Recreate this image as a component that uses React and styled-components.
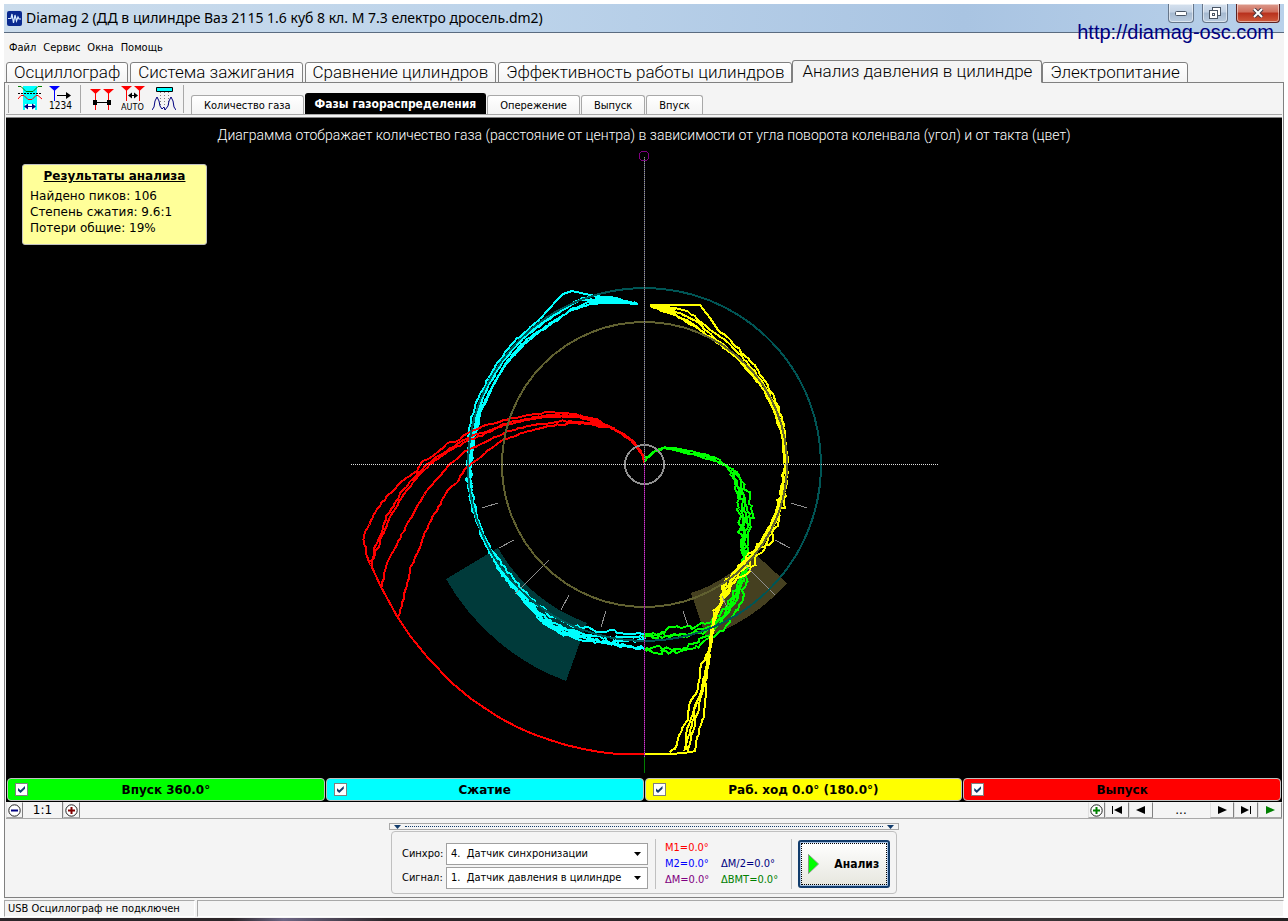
import { useState } from "react";
import styled, { createGlobalStyle } from "styled-components";

const tahoma = `"DejaVu Sans Condensed", "DejaVu Sans", sans-serif`;
const verdana = `"DejaVu Sans", sans-serif`;
const arial = `"Liberation Sans", sans-serif`;
const roboto = `Roboto, "Liberation Sans", sans-serif`;

const GlobalStyle = createGlobalStyle`
  * {
    box-sizing: border-box;
  }

  body {
    margin: 0;
    background: #fff;
    color: #000;
    font-family: ${tahoma};
    font-size: 11px;
  }

  button, select {
    font: inherit;
    color: inherit;
  }
`

const Page = styled.div`
  position: relative;
  display: flex;
  flex-direction: column;
  min-height: 100vh;
  padding-top: 4px;
`

const Window = styled.div`
  display: flex;
  flex-direction: column;
  flex: 1;
  margin: 0 4px;
  background: #f4f4f4;
`

const TitleBar = styled.header`
  display: flex;
  align-items: center;
  height: 29px;
  padding: 0 4px 0 3px;
  border-bottom: 1px solid #5a6b80;
  background: linear-gradient(90deg, #cbdcec 0%, #bcd3ea 40%, #a9c4e2 75%, #b9d1ea 100%);
`

const AppTitle = styled.h1`
  flex: 1;
  margin: 0 0 0 4px;
  font-family: "Noto Sans", sans-serif;
  font-size: 14px;
  font-weight: normal;
  line-height: 28px;
  white-space: nowrap;
`

const WindowButtons = styled.div`
  display: flex;
  gap: 8px;
  align-self: flex-start;
`

const WindowButton = styled.button`
  display: flex;
  align-items: center;
  justify-content: center;
  width: ${(props) => (props.$close ? "44px" : "26px")};
  height: 19px;
  padding: 0;
  border: 1px solid ${(props) => (props.$close ? "#5b2222" : "#66768a")};
  border-top: none;
  border-radius: 0 0 4px 4px;
  box-shadow: inset 0 0 0 1px rgba(255, 255, 255, 0.5);
  background: ${(props) => props.$close
    ? "linear-gradient(#dc9a8c 0%, #cf6d5b 45%, #b8301c 50%, #cf5a3c 100%)"
    : "linear-gradient(#d5e1ee 0%, #c3d2e4 45%, #a5b9d0 50%, #bccde0 100%)"};
`

const SiteLink = styled.a`
  position: absolute;
  top: 20px;
  right: 14px;
  color: #000080;
  font-family: ${arial};
  font-size: 20px;
  line-height: 24px;
  text-decoration: none;
`

const Menu = styled.nav`
  display: flex;
  align-items: center;
  gap: 7px;
  height: 27px;
  padding: 1px 5px 0;
`

const MenuItem = styled.button`
  padding: 0;
  border: none;
  background: none;
`

const MainTabs = styled.div`
  display: flex;
  align-items: flex-end;
  gap: 2px;
  height: 23px;
  margin-bottom: -1px;
  padding-left: 2px;
`

const MainTab = styled.button`
  position: relative;
  height: ${(props) => (props.$active ? "23px" : "21px")};
  margin: ${(props) => (props.$active ? "0 -2px" : "0")};
  padding: 0 ${(props) => (props.$active ? "9px" : "7px")};
  border: 1px solid #808080;
  border-bottom-color: ${(props) => (props.$active ? "#f4f4f4" : "#808080")};
  border-radius: 3px 3px 0 0;
  background: ${(props) => (props.$active ? "#f4f4f4" : "linear-gradient(#fff, #f4f4f4)")};
  font-family: ${roboto};
  font-size: 17px;
  font-weight: 300;
  line-height: 19px;
  white-space: nowrap;
`

const TabPanel = styled.main`
  display: flex;
  flex-direction: column;
  flex: 1;
  border: 1px solid #808080;
  padding: 0 1px;
`

const Toolbar = styled.div`
  display: flex;
  align-items: flex-start;
  height: 32px;
  padding-left: 2px;
  border-bottom: 1px solid #a8a8a8;
`

const ToolSeparator = styled.span`
  width: 1px;
  height: 28px;
  margin-top: 2px;
  background: #a8a8a8;
`

const ToolGroup = styled.div`
  display: flex;
  gap: 7px;
  padding: 3px 7px 0 9px;
`

const ToolButton = styled.button`
  display: block;
  width: 24px;
  height: 26px;
  padding: 0;
  border: none;
  background: none;
`

const SubTabs = styled.div`
  display: flex;
  align-self: flex-end;
  align-items: flex-end;
  gap: 1px;
  margin-left: 7px;
`

const SubTab = styled.button`
  height: ${(props) => (props.$active ? "21px" : "19px")};
  padding: 0 ${(props) => (props.$active ? "9px" : "12px")};
  border: 1px solid ${(props) => (props.$active ? "#000" : "#a8a8a8")};
  border-bottom: none;
  border-radius: 3px 3px 0 0;
  background: ${(props) => (props.$active ? "#000" : "linear-gradient(#fff, #f4f4f4)")};
  color: ${(props) => (props.$active ? "#fff" : "#000")};
  font-size: ${(props) => (props.$active ? "12px" : "11px")};
  font-weight: ${(props) => (props.$active ? "bold" : "normal")};
  white-space: nowrap;
`

const Canvas = styled.section`
  position: relative;
  flex: 1;
  display: flex;
  flex-direction: column;
  align-items: center;
  margin-top: 2px;
  border-top: 1px solid #808080;
  background: #000;
`

const CanvasTitle = styled.h2`
  margin: 0;
  padding-top: 8px;
  color: #fff;
  font-family: ${roboto};
  font-size: 14px;
  font-weight: 300;
  line-height: 18px;
`

const Diagram = styled.svg`
  display: block;
  margin-top: 4px;
`

const Results = styled.aside`
  position: absolute;
  top: 46px;
  left: 16px;
  width: 185px;
  height: 81px;
  padding: 3px 7px;
  border: 1px solid #c0c0c0;
  border-radius: 3px;
  background: #ffff99;
  font-family: ${verdana};
  font-size: 12px;
  line-height: 16px;

  h3 {
    margin: 0 0 4px;
    font-size: 12px;
    text-align: center;
    text-decoration: underline;
  }

  p {
    margin: 0;
  }
`

const Strokes = styled.div`
  display: grid;
  grid-template-columns: repeat(4, 1fr);
  gap: 1px;
  padding: 0 1px 1px;
  background: #000;
`

const Stroke = styled.label`
  display: flex;
  align-items: center;
  height: 23px;
  padding: 0 8px 0 7px;
  border: 1px solid #c0c0c0;
  border-radius: 4px;
  background: ${(props) => props.$color};
  font-family: ${verdana};
  font-size: 12px;
  font-weight: bold;

  span {
    flex: 1;
    padding-right: 12px;
    text-align: center;
  }
`

const CheckBox = styled.input`
  appearance: none;
  width: 13px;
  height: 13px;
  margin: 0;
  border: 1px solid #808080;
  background: #fff;

  &:checked::before {
    content: "";
    display: block;
    width: 7px;
    height: 7px;
    margin: 2px;
    background: #123c6c;
    clip-path: polygon(0 30%, 36% 62%, 100% 0, 100% 38%, 36% 100%, 0 68%);
  }
`

const ScaleBar = styled.div`
  display: flex;
  justify-content: space-between;
  height: 17px;
  border-bottom: 1px solid #a8a8a8;
`

const ScaleGroup = styled.div`
  display: flex;
`

const SmallButton = styled.button`
  display: flex;
  align-items: center;
  justify-content: center;
  width: ${(props) => (props.$round ? "17px" : "24px")};
  height: 16px;
  padding: 0;
  border: 1px solid;
  border-color: #f4f4f4 #808080 #a8a8a8 #e0e0e0;
  background: #f4f4f4;
`

const ScaleValue = styled.span`
  width: ${(props) => (props.$wide ? "57px" : "40px")};
  border-right: 1px solid ${(props) => (props.$wide ? "#f4f4f4" : "#808080")};
  font-family: ${verdana};
  font-size: 12px;
  line-height: 16px;
  text-align: center;
`

const Controls = styled.section`
  display: flex;
  flex-direction: column;
  align-items: center;
  padding: 4px 0 3px;
`

const Splitter = styled.div`
  display: flex;
  align-items: center;
  gap: 4px;
  width: 510px;
  height: 7px;
  padding: 0 4px;
  border: 1px solid #a8a8a8;

  i {
    flex: 1;
    border-top: 1px dotted #123c6c;
  }
`

const GroupBox = styled.form`
  display: flex;
  align-items: center;
  width: 506px;
  height: 63px;
  margin-top: 1px;
  padding: 2px 6px 0 10px;
  border: 1px solid #c0c0c0;
  border-radius: 4px;
`

const Fields = styled.div`
  display: grid;
  grid-template-columns: 44px 202px;
  row-gap: 2px;
  align-items: center;
  margin-top: 4px;
`

const SelectBox = styled.div`
  position: relative;

  svg {
    position: absolute;
    top: 9px;
    right: 7px;
    pointer-events: none;
  }
`

const Select = styled.select`
  appearance: none;
  display: block;
  width: 100%;
  height: 22px;
  padding: 0 4px;
  border: 1px solid #a0a0a0;
  border-radius: 0;
  background: #fff;
`

const Marks = styled.div`
  display: grid;
  grid-template-columns: 56px 1fr;
  align-content: center;
  width: 138px;
  height: 50px;
  margin: 0 6px 0 7px;
  padding-left: 9px;
  border: 1px solid #c0c0c0;
  border-width: 0 1px;
  line-height: 16px;
`

const Mark = styled.span`
  grid-column: ${(props) => props.$col};
  color: ${(props) => props.$color};
`

const AnalyzeButton = styled.button`
  display: flex;
  align-items: center;
  gap: 15px;
  width: 92px;
  height: 48px;
  padding: 0 8px;
  border: 2px solid #123c6c;
  border-radius: 3px;
  outline: 1px dotted #000;
  outline-offset: -4px;
  box-shadow: inset 0 0 0 1px #a8c4e6;
  background: linear-gradient(#fff, #e6e6de);
  font-size: 12px;
  font-weight: bold;
`

const StatusBar = styled.footer`
  display: flex;
  gap: 2px;
  padding: 2px 0 1px;
`

const StatusCell = styled.div`
  width: ${(props) => (props.$fill ? "auto" : "191px")};
  flex: ${(props) => (props.$fill ? "1" : "none")};
  height: 17px;
  padding: 0 3px;
  border: 1px solid;
  border-color: #a8a8a8 #fff #fff #a8a8a8;
  line-height: 15px;
`

const Desktop = styled.div`
  height: 4px;
  background: linear-gradient(90deg, #2c2629 0 18%, #6d6684 22%, #2c2629 30% 60%, #3a3537 80%, #232021);
`

const mainTabs = [
  "Осциллограф",
  "Система зажигания",
  "Сравнение цилиндров",
  "Эффективность работы цилиндров",
  "Анализ давления в цилиндре",
  "Электропитание",
]

const subTabs = ["Количество газа", "Фазы газораспределения", "Опережение", "Выпуск", "Впуск"];

const strokes = [
  { name: "Впуск 360.0°", color: "#00ff00" },
  { name: "Сжатие", color: "#00ffff" },
  { name: "Раб. ход 0.0° (180.0°)", color: "#ffff00" },
  { name: "Выпуск", color: "#ff0000" },
]

const marks = [
  { text: "М1=0.0°", color: "#ff0000", col: 1 },
  { text: "М2=0.0°", color: "#0000ff", col: 1 },
  { text: "ΔМ/2=0.0°", color: "#000080", col: 2 },
  { text: "ΔМ=0.0°", color: "#800080", col: 1 },
  { text: "ΔВМТ=0.0°", color: "#008000", col: 2 },
]

// every trace: noise amplitude and key points, centre of the diagram is 644,464
const redStart = "644,463 644,458 638,448 633,442 623,434 610,427";
const redTraces = [
  [1, `${redStart} 597,420 583,416 567,413 550,412 530,415 508,419 490,424 470,432 457,441 448,443 438,453 423,462 417,471 400,483 387,497 378,508 365,532 363,540 367,555 371,565`],
  [1, `${redStart} 597,421 580,416 550,415 530,418 510,422 490,430 470,437 450,448 430,462 415,476 403,490 387,516 382,532 375,547 371,565`],
  [1, `${redStart} 595,421 575,417 550,417 528,420 508,424 490,432 470,440 450,450 432,463 418,476 406,491 393,512 383,533 379,545 371,562`],
  [1, `${redStart} 593,423 563,421 527,426 503,433 483,443 465,452 450,464 438,478 427,491 415,510 400,538 388,562 381,587`],
  [1, `${redStart} 603,427 583,423 557,425 527,431 500,442 475,461 465,470 456,483 448,491 433,517 422,540 417,553 410,568 407,587 402,603 398,618`],
  [0, "371,565 381,587 398,618 411,637 428,658 452,683 470,698 483,707 500,718 517,727 533,734 550,740 566,745 583,749 600,752 617,754 645,754"],
]

const cyanTraces = [
  [0, "638,304 617,299 590,295 572,291 563,294 557,300 549,309 540,319"],
  [1, "540,319 530,328 517,339 505,352 494,368 485,385 475,405 470,425 468,440"],
  [1, "638,304 612,298 590,296 575,301 560,310 545,321 530,332 512,350 498,368 486,390 477,412 472,440"],
  [1, "638,304 600,303 585,305 570,311 550,325 534,334 518,348 503,367 489,392 479,415 473,442"],
  [1, "638,304 604,301 588,302 572,309 553,322 538,333 522,346 506,364 492,388 481,412 474,440"],
  [1, "638,304 606,300 580,300 566,308 548,320 536,328 520,342 504,360 490,383 480,405 472,440"],
  [2, "468,440 467,465 468,490 475,514 485,540 500,562 520,588 540,606 554,618 570,625 590,629 600,631 610,631 628,633 644,635"],
  [2, "472,440 469,466 471,490 476,516 487,545 500,568 518,590 537,612 552,624 572,632 590,634 605,638 625,636 644,638"],
  [2, "473,442 470,465 470,492 475,512 483,538 496,565 512,587 530,606 545,622 560,632 580,637 600,641 620,646 644,649"],
  [2, "474,440 471,470 470,495 477,520 488,548 502,574 520,595 534,613 550,627 568,635 590,638 610,642 628,641 644,640"],
  [2, "472,440 468,460 467,480 470,500 478,525 487,545 498,566 512,587 530,608 545,624 560,633 580,640 600,643 622,645 644,648"],
  [2, "484,540 493,556 505,575 516,590 527,602 536,612 544,620 556,628 574,634 592,637"],
  [2, "470,440 469,470 471,500 480,530 491,554 504,573 517,588 529,602 540,614 549,621 566,628 580,632"],
]

const yellowTraces = [
  [0, "650,305 700,305 710,318 718,330"],
  [1, "718,330 730,340 742,352 754,365 767,385 778,405 785,432 787,457"],
  [1, "650,305 688,311 707,327 727,342 742,356 757,375 768,391 778,412 784,436 787,464"],
  [1, "650,306 680,313 699,323 713,337 733,353 749,371 764,390 774,412 782,436 786,464"],
  [1, "650,306 687,320 707,335 725,347 747,368 763,388 775,410 783,435 785,464"],
  [1, "650,306 675,315 700,330 727,350 747,366 765,387 777,409 784,434 786,464"],
  [3, "787,457 785,483 783,507 777,520 768,540 753,558 740,575 728,590 718,606"],
  [3, "787,464 783,492 776,518 765,535 752,552 738,566 724,583 722,600 714,614"],
  [2, "786,464 782,488 777,514 768,532 757,548 748,560 735,572 728,590 716,612"],
  [2, "785,464 782,490 775,518 763,538 752,556 742,568 722,586 720,606 714,612"],
  [3, "786,464 780,494 777,520 772,540 758,556 750,572 734,580 725,598 717,610"],
  [2, "776,512 768,530 756,550 744,566 732,578 724,592 722,602 713,618 713,632"],
  [1, "718,606 714,622 710,650 702,663 697,690 690,703 687,720 682,728 675,748 670,753"],
  [1, "714,614 712,630 708,653 706,667 702,687 695,707 686,733 687,750"],
  [1, "716,612 712,632 709,656 705,690 705,713 697,738 696,751"],
  [0, "696,751 684,753 670,754 645,754"],
  [1, "714,612 713,630 709,660 704,685 698,710 692,735 687,752"],
  [1, "717,610 711,634 708,662 702,690 696,706 691,730 684,752"],
]

const greenStart = "644,463 647,458 655,451 665,448";
const greenTraces = [
  [1, `${greenStart} 683,452 707,457 723,463 731,472`],
  [1, `${greenStart} 675,448 695,452 715,458 733,470`],
  [1, `${greenStart} 672,449 690,453 712,460 728,467`],
  [3, "731,472 735,483 738,503 740,530 743,557 742,577 733,597 720,614 707,621 693,627 673,628 663,632 644,637"],
  [3, "733,470 742,484 745,505 743,530 746,552 741,577 737,596 726,614 712,626 696,632 675,637 644,636"],
  [3, "728,467 737,482 742,505 742,532 743,555 745,575 740,592 730,610 715,630 698,642 680,650 664,648 644,648"],
  [3, "733,470 747,490 752,517 748,535 748,557 747,573 743,600 728,622 713,638 693,649 663,653 644,647"],
  [3, "731,470 740,492 749,510 744,535 745,558 741,580 731,602 719,620 702,633 680,636 662,634 644,638"],
]

const ticks = [
  [482, 508, 498, 503],
  [499, 548, 514, 540],
  [515, 594, 549, 560],
  [561, 610, 569, 595],
  [601, 627, 606, 611],
  [791, 503, 807, 508],
  [775, 540, 790, 548],
  [746, 566, 775, 595],
  [683, 611, 688, 626],
  [722, 596, 727, 607],
]

// breaks a trace into short steps and shakes them like a measured signal
const roughen = (amp, text, seed) => {
  const points = text.split(" ").map((p) => p.split(",").map(Number));
  let state = seed * 7919 + 17;
  const random = () => {
    state = (state * 1103515245 + 12345) % 2147483648;
    return state / 2147483648 - 0.5;
  }

  const result = [points[0]];
  for (let i = 1; i < points.length; i++) {
    const [x1, y1] = points[i - 1];
    const [x2, y2] = points[i];
    const steps = Math.max(1, Math.round(Math.hypot(x2 - x1, y2 - y1) / 4));
    for (let s = 1; s <= steps; s++) {
      const x = x1 + ((x2 - x1) * s) / steps + random() * amp * 1.6;
      const y = y1 + ((y2 - y1) * s) / steps + random() * amp * 1.6;
      result.push([x.toFixed(1), y.toFixed(1)]);
    }
  }
  return result.map((p) => p.join(",")).join(" ");
}

const Traces = ({ color, traces, wedge }) => (
  <g fill="none" stroke={color} strokeWidth="2">
    {wedge && <polygon points={wedge} fill={color} stroke="none" />}
    {traces.map(([amp, text], i) => (
      <polyline key={i} points={roughen(amp, text, i + 1)} />
    ))}
  </g>
)

const PhaseDiagram = ({ shown }) => (
  <Diagram width="600" height="630" viewBox="344 148 600 630" shapeRendering="crispEdges" aria-hidden="true">
    <path d="M498 548A168 168 0 0 0 587 623L566 681A230 230 0 0 1 446 579Z" fill="#003a3a" />
    <path d="M691 593A137 137 0 0 0 753 552L787 583A188 188 0 0 1 706 637Z" fill="#454020" />

    {shown[0] && <Traces color="#00ff00" traces={greenTraces} />}
    {shown[1] && <Traces color="#00ffff" traces={cyanTraces} wedge="638,304 600,297 590,300 592,304" />}
    {shown[2] && <Traces color="#ffff00" traces={yellowTraces} wedge="650,305 676,309 672,315" />}
    {shown[3] && <Traces color="#ff0000" traces={redTraces} />}

    <g stroke="#909090">
      {ticks.map(([x1, y1, x2, y2]) => (
        <line key={`${x1}-${y1}`} x1={x1} y1={y1} x2={x2} y2={y2} />
      ))}
    </g>

    <g fill="none" strokeWidth="2">
      <circle cx="644.5" cy="464.5" r="176.5" stroke="#005555" />
      <circle cx="644.5" cy="464.5" r="142.5" stroke="#606030" />
      <circle cx="644.5" cy="464.5" r="19.5" stroke="#909090" />
    </g>

    <circle cx="644" cy="156" r="5" fill="none" stroke="#800080" />
    <path d="M351 464.5H938" stroke="#e0e0e0" strokeDasharray="1 1" />
    <path d="M644.5 157V464" stroke="#404070" />
    <path d="M644.5 157V464" stroke="#a0a088" strokeDasharray="1 1" />
    <path d="M644.5 464V757" stroke="#800080" />
    <path d="M644.5 464V757" stroke="#c050c0" strokeDasharray="1 1" />
    <path d="M644.5 757V773" stroke="#008000" />
  </Diagram>
)

const RoundIcon = ({ color, plus }) => (
  <svg width="13" height="13" viewBox="0 0 13 13">
    <circle cx="6.5" cy="6.5" r="5.7" fill="#fff" stroke="#222" />
    <path d={plus ? "M3 6.5H10M6.5 3V10" : "M3 6.5H10"} stroke={color} strokeWidth="2" />
  </svg>
)

const ArrowIcon = ({ d, color = "#000" }) => (
  <svg width="12" height="8" viewBox="0 0 12 8">
    <path d={d} fill={color} />
  </svg>
)

const DropArrow = ({ color = "#000" }) => (
  <svg width="7" height="4" viewBox="0 0 7 4">
    <path d="M0 0H7L3.5 4Z" fill={color} />
  </svg>
)

const toolIcons = {
  range: (
    <>
      <path d="M5 0H19V24H5Z" fill="#00ffff" />
      <path d="M7 18H17V24H7Z" fill="#fff" />
      <path d="M0 .5H3L8 5.500H15L20 .5H24" fill="none" stroke="#008000" />
      <path d="M0 7.500H24" stroke="#000" strokeDasharray="2 1" />
      <path d="M0 13L3 9.500H6L10 13.500H14L18 9.500H20L24 13" fill="none" stroke="#ff0000" />
      <path d="M7 20.500H17" stroke="#000080" />
      <path d="M6 20.500L10 17.500V23.500ZM18 20.500L14 17.500V23.500Z" fill="#000080" />
    </>
  ),
  count: (
    <>
      <path d="M0 0H11L5.500 5Z" fill="#0000ff" />
      <path d="M5.500 4V15" stroke="#0000ff" />
      <path d="M8 9.500H19" stroke="#000" />
      <path d="M22 9.500L17 6V13Z" fill="#000" />
      <text x="0" y="23" fontSize="10" fontFamily="DejaVu Sans Condensed">1234</text>
    </>
  ),
  markers: (
    <>
      <path d="M0 3H11L5.500 8ZM13 3H24L18.500 8Z" fill="#ff0000" />
      <path d="M5.500 7V24M18.500 7V24" stroke="#ff0000" />
      <path d="M5 16.500H19" stroke="#000" />
      <path d="M3 14H7V19H3ZM17 14H21V19H17Z" fill="#000" />
    </>
  ),
  auto: (
    <>
      <path d="M0 0H11L5.500 5ZM13 0H24L18.500 5Z" fill="#ff0000" />
      <path d="M5.500 4V15M18.500 4V15" stroke="#ff0000" />
      <path d="M8 9.500H16" stroke="#000" />
      <path d="M7 9.500L11 6.500V12.500ZM17 9.500L13 6.500V12.500Z" fill="#000" />
      <text x="0" y="24" fontSize="9" fontFamily="DejaVu Sans Condensed">AUTO</text>
    </>
  ),
  pulse: (
    <>
      <path d="M4.500 1.500H20.500V5.500H4.500Z" fill="#00ffff" stroke="#000" />
      <path d="M8.500 6V20M12.500 6V20M16.500 6V20" stroke="#808080" strokeDasharray="1 2" />
      <path d="M0 24L2 21L3 15L5 11L7 15L8 20L10 23L12 21L13 24L16 20L17 15L19 11L21 15L22 21L24 24" fill="none" stroke="#000080" />
    </>
  ),
}

const Tool = ({ name, label }) => (
  <ToolButton type="button" aria-label={label}>
    <svg width="24" height="25" viewBox="0 0 24 25">{toolIcons[name]}</svg>
  </ToolButton>
)

const App = () => {
  const [mainTab, setMainTab] = useState(4);
  const [subTab, setSubTab] = useState(1);
  const [shown, setShown] = useState([true, true, true, true]);

  const onToggleStroke = (index) => {
    setShown(shown.map((value, i) => (i === index ? !value : value)));
  }

  return (
    <>
      <GlobalStyle />
      <Page>
        <Window>
          <TitleBar>
            <svg width="15" height="15" viewBox="0 0 15 15">
              <rect width="15" height="15" rx="2" fill="#0a2a90" />
              <path d="M1 7.500H4L5 3L6.500 12L8 4L9.500 10L11 6L12 8H14" fill="none" stroke="#d8ecff" strokeWidth="1.200" />
            </svg>
            <AppTitle>Diamag 2 (ДД в цилиндре Ваз 2115 1.6 куб 8 кл. М 7.3 електро дросель.dm2)</AppTitle>
            <WindowButtons>
              <WindowButton type="button" aria-label="Свернуть">
                <svg width="12" height="5" viewBox="0 0 12 5">
                  <rect x="0.500" y="0.500" width="11" height="4" rx="1" fill="#fff" stroke="#4a5564" />
                </svg>
              </WindowButton>
              <WindowButton type="button" aria-label="Восстановить">
                <svg width="12" height="12" viewBox="0 0 12 12">
                  <rect x="3.500" y="0.500" width="8" height="8" fill="#fff" stroke="#4a5564" />
                  <rect x="0.500" y="3.500" width="8" height="8" fill="#fff" stroke="#4a5564" />
                  <rect x="3.500" y="6.500" width="2" height="2" fill="none" stroke="#4a5564" />
                </svg>
              </WindowButton>
              <WindowButton type="button" $close aria-label="Закрыть">
                <svg width="12" height="10" viewBox="0 0 12 10">
                  <path d="M2 1L10 9M10 1L2 9" stroke="#4a3a44" strokeWidth="4" />
                  <path d="M2 1L10 9M10 1L2 9" stroke="#fff" strokeWidth="2" />
                </svg>
              </WindowButton>
            </WindowButtons>
          </TitleBar>

          <Menu>
            <MenuItem type="button">Файл</MenuItem>
            <MenuItem type="button">Сервис</MenuItem>
            <MenuItem type="button">Окна</MenuItem>
            <MenuItem type="button">Помощь</MenuItem>
          </Menu>

          <MainTabs>
            {mainTabs.map((name, i) => (
              <MainTab key={name} type="button" $active={i === mainTab} onClick={() => setMainTab(i)}>
                {name}
              </MainTab>
            ))}
          </MainTabs>

          <TabPanel>
            <Toolbar>
              <ToolSeparator />
              <ToolGroup>
                <Tool name="range" label="Диапазон" />
                <Tool name="count" label="Нумерация" />
              </ToolGroup>
              <ToolSeparator />
              <ToolGroup>
                <Tool name="markers" label="Маркеры" />
                <Tool name="auto" label="Авто" />
                <Tool name="pulse" label="Импульсы" />
              </ToolGroup>
              <ToolSeparator />
              <SubTabs>
                {subTabs.map((name, i) => (
                  <SubTab key={name} type="button" $active={i === subTab} onClick={() => setSubTab(i)}>
                    {name}
                  </SubTab>
                ))}
              </SubTabs>
            </Toolbar>

            <Canvas>
              <CanvasTitle>
                Диаграмма отображает количество газа (расстояние от центра) в зависимости от угла поворота коленвала (угол) и от такта (цвет)
              </CanvasTitle>
              <PhaseDiagram shown={shown} />
              <Results>
                <h3>Результаты анализа</h3>
                <p>Найдено пиков: 106</p>
                <p>Степень сжатия: 9.6:1</p>
                <p>Потери общие: 19%</p>
              </Results>
            </Canvas>

            <Strokes>
              {strokes.map(({ name, color }, i) => (
                <Stroke key={name} $color={color}>
                  <CheckBox type="checkbox" checked={shown[i]} onChange={() => onToggleStroke(i)} />
                  <span>{name}</span>
                </Stroke>
              ))}
            </Strokes>

            <ScaleBar>
              <ScaleGroup>
                <SmallButton type="button" $round aria-label="Уменьшить"><RoundIcon color="#000080" /></SmallButton>
                <ScaleValue>1:1</ScaleValue>
                <SmallButton type="button" $round aria-label="Увеличить"><RoundIcon color="#800000" plus /></SmallButton>
              </ScaleGroup>
              <ScaleGroup>
                <SmallButton type="button" $round aria-label="Добавить"><RoundIcon color="#008000" plus /></SmallButton>
                <SmallButton type="button" aria-label="В начало"><ArrowIcon d="M1 0H2V8H1ZM11 0V8L3 4Z" /></SmallButton>
                <SmallButton type="button" aria-label="Назад"><ArrowIcon d="M10 0V8L1 4Z" /></SmallButton>
                <ScaleValue $wide>...</ScaleValue>
                <SmallButton type="button" aria-label="Вперёд"><ArrowIcon d="M2 0V8L11 4Z" /></SmallButton>
                <SmallButton type="button" aria-label="В конец"><ArrowIcon d="M10 0H11V8H10ZM1 0V8L9 4Z" /></SmallButton>
                <SmallButton type="button" aria-label="Воспроизвести"><ArrowIcon d="M2 0V8L11 4Z" color="#008000" /></SmallButton>
              </ScaleGroup>
            </ScaleBar>

            <Controls>
              <Splitter>
                <DropArrow color="#123c6c" />
                <i />
                <DropArrow color="#123c6c" />
              </Splitter>
              <GroupBox onSubmit={(event) => event.preventDefault()}>
                <Fields>
                  <label htmlFor="sync">Синхро:</label>
                  <SelectBox>
                    <Select id="sync">
                      <option>4.&nbsp; Датчик синхронизации</option>
                    </Select>
                    <DropArrow />
                  </SelectBox>
                  <label htmlFor="signal">Сигнал:</label>
                  <SelectBox>
                    <Select id="signal">
                      <option>1.&nbsp; Датчик давления в цилиндре</option>
                    </Select>
                    <DropArrow />
                  </SelectBox>
                </Fields>
                <Marks>
                  {marks.map(({ text, color, col }) => (
                    <Mark key={text} $color={color} $col={col}>{text}</Mark>
                  ))}
                </Marks>
                <AnalyzeButton type="submit">
                  <svg width="11" height="20" viewBox="0 0 11 20">
                    <path d="M0.500 0.500V19.500L10.500 10Z" fill="#00ff00" stroke="#80a080" />
                  </svg>
                  Анализ
                </AnalyzeButton>
              </GroupBox>
            </Controls>
          </TabPanel>

          <StatusBar>
            <StatusCell>USB Осциллограф не подключен</StatusCell>
            <StatusCell $fill />
          </StatusBar>
        </Window>
        <Desktop />
        <SiteLink href="http://diamag-osc.com">http://diamag-osc.com</SiteLink>
      </Page>
    </>
  )
}

export default App
